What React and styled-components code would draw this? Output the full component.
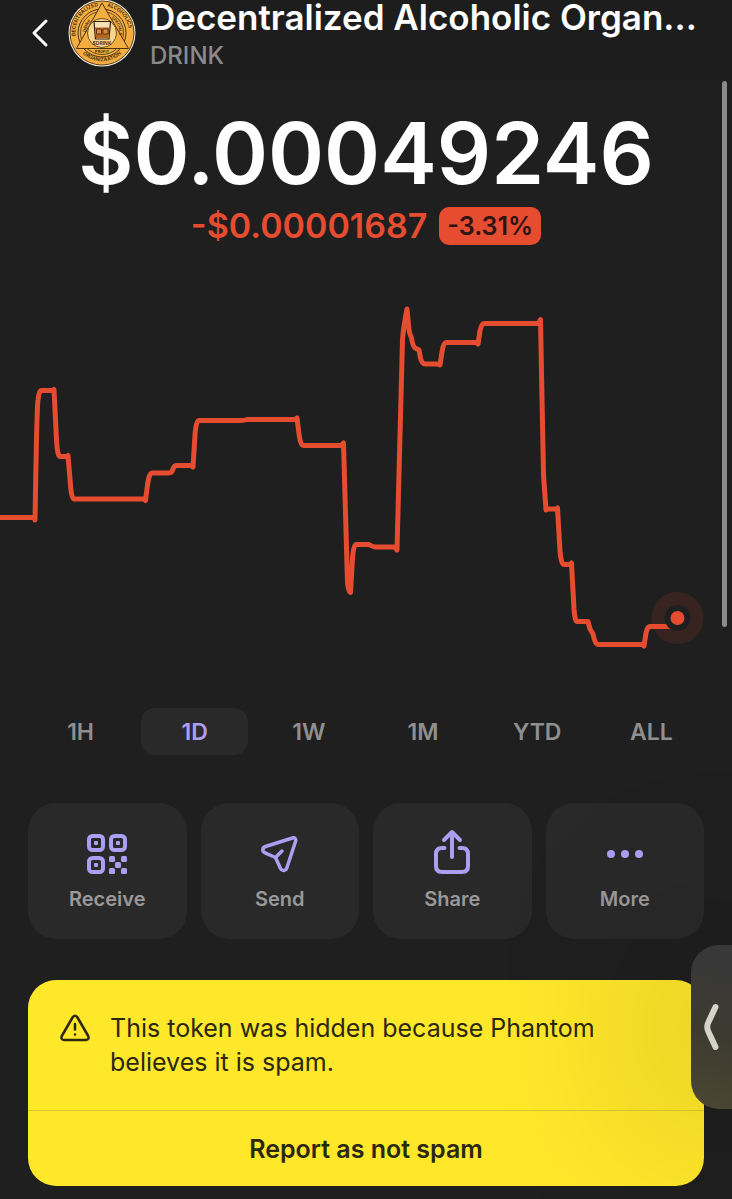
import React from 'react';
import styled, { createGlobalStyle } from 'styled-components';

const RANGES = ['1H', '1D', '1W', '1M', 'YTD', 'ALL'];

const LINE =
  'M0 517.5 H33 Q35 517.5 35 520 C35.5 500 36.5 410 38 400 Q39 390.5 41 390.5 H53 L54 389.5 ' +
  'L56.5 440 Q57.5 456.5 60 456.5 H67 L68 455.5 L70.5 485 Q71.5 499 74 499 H144 L145.5 500.5 ' +
  'L147.5 485 Q149 473 152 473 H169 Q172 473 173 469 Q174 465.5 177 465.5 H191 L193 467 ' +
  'L195 435 Q196 420.5 199 420.5 H241 Q244 420.5 247 419.5 H295 L297 418 L299 434 Q300.5 445.5 303 445.5 ' +
  'H341 L343.5 443 L347.5 583 Q348.5 592 350.5 592.5 L352.5 558 Q353.5 544.5 356 544.5 H369 ' +
  'Q372 546.5 375 547 H395 L397 550 L402.5 340 Q403 330 407 309 L409 330 Q410 335 411.5 338 ' +
  'Q413 348 416 348.5 L419 350 L420.5 358 Q422 364 425 364 H438 L440 365 L442 352 Q443.5 342.5 446 342.5 ' +
  'H476 L478 344 L480 331 Q481.5 323.5 484 323.5 H539 L540.5 319.5 L543.5 475 L546 510 L548 509 H556 ' +
  'L557.5 508 L560 551 Q561 564.5 564 564.5 H570 L571.5 563 L574 609 Q575 621.5 577 621.5 H588 ' +
  'L590 629 L593 634 Q595 644.5 598 644.5 H642 L644 646 L646 633 Q647.5 626.5 650 626.5 H674';

function BackIcon() {
  return (
    <svg width="18" height="30" viewBox="0 0 18 30" fill="none">
      <path d="M15 3 L3 15 L15 27" stroke="#fff" strokeWidth="3" strokeLinecap="round" strokeLinejoin="round" />
    </svg>
  );
}

function TokenLogo() {
  return (
    <svg width="68" height="68" viewBox="0 0 68 68" fill="none" aria-label="DRINK token">
      <defs>
        <path id="arcLeft" d="M7.500 36 A26.500 26.500 0 0 1 31 6" />
        <path id="arcRight" d="M39 6.500 A27 27 0 0 1 60.500 38" />
        <path id="arcBottom" d="M9 47 A29 29 0 0 0 59 47" />
        <path id="sideLeft" d="M18 32 A17 17 0 0 1 27 18" />
        <path id="sideRight" d="M43 18.500 A17 17 0 0 1 51 36" />
      </defs>
      <circle cx="34" cy="33" r="33.500" fill="#f5efe2" />
      <circle cx="34" cy="33" r="32" fill="#f3ae3f" stroke="#5c3a14" strokeWidth="1" />
      <circle cx="34" cy="33" r="24" stroke="#4d3213" strokeWidth="1" />
      <circle cx="34" cy="33" r="21.500" stroke="#4d3213" strokeWidth="0.800" />
      <path d="M34 3 L60.500 48.500 H8.500 Z" fill="#f3ae3f" stroke="#4d3213" strokeWidth="1" />
      <circle cx="34" cy="33" r="14.500" fill="#f8d58d" stroke="#4d3213" strokeWidth="0.800" />
      <path d="M26 21.500 H42.500 L41 39 H27.500 Z" fill="#f6e2b8" stroke="#33200f" strokeWidth="1.200" />
      <path d="M27 27.500 H41.500 L40.500 38 H28 Z" fill="#b8641f" />
      <path d="M28.500 29 h5 v5 h-5 z M35 29 h5 v5 h-5 z" stroke="#4a2511" strokeWidth="0.800" fill="#d78b3c" />
      <LogoText x="34" y="45" fontSize="5" textAnchor="middle">$DRINK</LogoText>
      <LogoText x="34" y="53" fontSize="4" textAnchor="middle">PROFIT</LogoText>
      <LogoText fontSize="5"><textPath href="#arcLeft">DECENTRALIZED</textPath></LogoText>
      <LogoText fontSize="5"><textPath href="#arcRight">ALCOHOLICS</textPath></LogoText>
      <LogoText fontSize="5" textAnchor="middle"><textPath href="#arcBottom" startOffset="50%">ORGANIZAATION</textPath></LogoText>
      <LogoText fontSize="4"><textPath href="#sideLeft">DRINK</textPath></LogoText>
      <LogoText fontSize="4"><textPath href="#sideRight">SPECIALS</textPath></LogoText>
    </svg>
  );
}

function ReceiveIcon() {
  return (
    <svg width="44" height="44" viewBox="0 0 44 44" fill="none">
      {[[4, 4], [26, 4], [4, 26]].map(([x, y]) => (
        <g key={`${x}-${y}`}>
          <rect x={x} y={y} width="14" height="14" rx="3.500" stroke="#ab9ff2" strokeWidth="4" />
          <rect x={x + 5} y={y + 5} width="4" height="4" rx="1" fill="#ab9ff2" />
        </g>
      ))}
      {[[24, 24], [36, 24], [30, 30], [24, 36], [36, 36]].map(([x, y]) => (
        <rect key={`${x}-${y}`} x={x} y={y} width="6" height="6" rx="1.500" fill="#ab9ff2" />
      ))}
    </svg>
  );
}

function SendIcon() {
  return (
    <svg width="44" height="44" viewBox="0 0 44 44" fill="none" stroke="#ab9ff2" strokeWidth="3.500" strokeLinecap="round" strokeLinejoin="round">
      <path d="M34.500 6 L7.500 14.500 C4 15.700 4 19.500 7 20.800 L17.500 25.500 L22.500 36.500 C24 39.500 27.800 39 28.800 36 L37.500 9.500 C38.300 7 37 5.300 34.500 6 Z" />
      <path d="M17.500 25.500 L24 19" />
    </svg>
  );
}

function ShareIcon() {
  return (
    <svg width="44" height="44" viewBox="0 0 44 44" fill="none" stroke="#ab9ff2" strokeWidth="4" strokeLinecap="round" strokeLinejoin="round">
      <path d="M22 25 V0.500 M14 8 L22 0 L30 8" />
      <path d="M14.500 16 H12 Q6 16 6 22 V34 Q6 40 12 40 H32 Q38 40 38 34 V22 Q38 16 32 16 H29.500" />
    </svg>
  );
}

function MoreIcon() {
  return (
    <svg width="44" height="44" viewBox="0 0 44 44" fill="#ab9ff2">
      <circle cx="8" cy="22" r="4" />
      <circle cx="22" cy="22" r="4" />
      <circle cx="36" cy="22" r="4" />
    </svg>
  );
}

function WarningIcon() {
  return (
    <svg width="30" height="28" viewBox="0 0 30 28" fill="none" stroke="#2b2711" strokeWidth="2.500" strokeLinecap="round" strokeLinejoin="round">
      <path d="M12.800 3 Q15 0.500 17.200 3 L28.200 22 Q29.500 25.500 26 26 H4 Q0.500 25.500 1.800 22 Z" />
      <path d="M15 10 V15.500" />
      <path d="M15 20.500 V20.600" />
    </svg>
  );
}

const ACTIONS = [
  { label: 'Receive', Icon: ReceiveIcon },
  { label: 'Send', Icon: SendIcon },
  { label: 'Share', Icon: ShareIcon },
  { label: 'More', Icon: MoreIcon }
];

export default class App extends React.Component {
  constructor(props) {
    super(props);
    this.state = { range: '1D' };
  }

  render() {
    const { range } = this.state;

    return (
      <Page>
        <GlobalStyle />
        <Header>
          <BackButton aria-label="Back">
            <BackIcon />
          </BackButton>
          <TokenLogo />
          <Heading>
            <Title>Decentralized Alcoholic Organ...</Title>
            <Ticker>DRINK</Ticker>
          </Heading>
        </Header>

        <Price>$0.00049246</Price>
        <Change>
          <Amount>-$0.00001687</Amount>
          <Badge>-3.31%</Badge>
        </Change>

        <Chart viewBox="0 280 732 400" fill="none">
          <path d={LINE} stroke="#e64c30" strokeWidth="5" strokeLinecap="round" strokeLinejoin="round" />
          <circle cx="677.500" cy="618" r="26" fill="#e64c30" fillOpacity="0.12" />
          <circle cx="677.500" cy="618" r="13" fill="#1f1f1f" />
          <circle cx="677.500" cy="618" r="7" fill="#e64c30" />
        </Chart>

        <Ranges>
          {RANGES.map(r => (
            <Range key={r} $active={r === range} onClick={() => this.setState({ range: r })}>
              {r}
            </Range>
          ))}
        </Ranges>

        <Actions>
          {ACTIONS.map(({ label, Icon }) => (
            <Action key={label}>
              <Icon />
              {label}
            </Action>
          ))}
        </Actions>

        <Warning>
          <Message>
            <WarningIcon />
            <MessageText>This token was hidden because Phantom believes it is spam.</MessageText>
          </Message>
          <Report>Report as not spam</Report>
        </Warning>

        <ScrollThumb />
        <Handle aria-label="Open side panel">
          <svg width="16" height="48" viewBox="0 0 16 48" fill="none">
            <path d="M11.500 4 L4.500 19 Q2 24 4.500 29 L11.500 44" stroke="#d6d3c8" strokeWidth="6" strokeLinecap="round" strokeLinejoin="round" />
          </svg>
        </Handle>
      </Page>
    );
  }
}

const GlobalStyle = createGlobalStyle`
  body {
    margin: 0;
    background: #1f1f1f;
  }

  * {
    box-sizing: border-box;
  }

  button {
    border: 0;
    padding: 0;
    background: none;
    color: inherit;
    font: inherit;
    cursor: pointer;
  }
`;

const LogoText = styled.text`
  fill: #3a2510;
  font-weight: 600;
`;

const Page = styled.main`
  position: relative;
  display: flex;
  flex-direction: column;
  min-height: 100vh;
  padding-bottom: 13px;
  overflow: hidden;
  background: #1f1f1f;
  color: #fff;
  font-family: Inter, 'Liberation Sans', sans-serif;
`;

const Header = styled.header`
  display: flex;
  align-items: flex-start;
  height: 80px;
  padding: 0 28px;
  background: #1d1d1d;

  > svg {
    flex-shrink: 0;
  }
`;

const BackButton = styled.button`
  display: flex;
  align-items: center;
  justify-content: center;
  width: 24px;
  height: 66px;
  margin-right: 16px;
`;

const Heading = styled.div`
  flex: 1;
  min-width: 0;
  margin-left: 14px;
`;

const Title = styled.h1`
  margin: 0;
  font-size: 35px;
  font-weight: 600;
  line-height: 34px;
  white-space: nowrap;
`;

const Ticker = styled.div`
  color: #8a8a8a;
  font-size: 24px;
  font-weight: 500;
  line-height: 44px;
`;

const Price = styled.div`
  margin-top: 26px;
  font-size: 85px;
  font-weight: 600;
  line-height: 96px;
  text-align: center;
`;

const Change = styled.div`
  display: flex;
  align-items: center;
  justify-content: center;
  gap: 12px;
  margin-top: 5px;
`;

const Amount = styled.span`
  color: #e64c30;
  font-size: 34px;
  font-weight: 600;
  line-height: 38px;
`;

const Badge = styled.span`
  padding: 0 8px;
  border-radius: 10px;
  background: #e64c30;
  color: #2c1512;
  font-size: 25px;
  font-weight: 600;
  line-height: 38px;
`;

const Chart = styled.svg`
  display: block;
  width: 100%;
  margin-top: 35px;
`;

const Ranges = styled.nav`
  display: grid;
  grid-template-columns: repeat(6, 1fr);
  gap: 7px;
  margin-top: 28px;
  padding: 0 27px;
`;

const Range = styled.button`
  && {
    height: 47px;
    border-radius: 14px;
    background: ${p => (p.$active ? '#292929' : 'transparent')};
    color: ${p => (p.$active ? '#ab9ff2' : '#8f8f8f')};
    font-size: 23px;
    font-weight: 600;
  }
`;

const Actions = styled.section`
  display: grid;
  grid-template-columns: repeat(4, 1fr);
  gap: 14px;
  margin-top: 48px;
  padding: 0 28px;
`;

const Action = styled.button`
  && {
    display: flex;
    flex-direction: column;
    align-items: center;
    gap: 10px;
    height: 136px;
    padding-top: 29px;
    border-radius: 28px;
    background: #292929;
    color: #999;
    font-size: 20px;
    font-weight: 600;
    line-height: 26px;
  }

  svg {
    overflow: visible;
  }
`;

const Warning = styled.section`
  margin: 41px 28px 0;
  border-radius: 28px;
  background: #ffe72a;
  color: #2b2711;
  overflow: hidden;
`;

const Message = styled.div`
  display: flex;
  gap: 20px;
  height: 130px;
  padding: 31px 32px 0;

  svg {
    flex-shrink: 0;
    margin-top: 3px;
  }
`;

const MessageText = styled.p`
  max-width: 520px;
  margin: 0;
  font-size: 25px;
  line-height: 34px;
`;

const Report = styled.button`
  && {
    width: 100%;
    height: 76px;
    border-top: 1px solid #dcc82c;
    font-size: 25px;
    font-weight: 600;
  }
`;

const ScrollThumb = styled.div`
  position: absolute;
  top: 81px;
  right: 5px;
  width: 5px;
  height: 546px;
  border-radius: 3px;
  background: #8b8b8b;
`;

const Handle = styled.button`
  && {
    position: absolute;
    right: 0;
    bottom: 90px;
    display: flex;
    align-items: center;
    justify-content: center;
    width: 41px;
    height: 164px;
    border-radius: 28px 0 0 28px;
    background: linear-gradient(200deg, #383838 15%, #3d3b30 55%, #4b4833 100%);
    box-shadow: 0 0 180px 30px rgba(0, 0, 0, 0.2);
  }
`;
